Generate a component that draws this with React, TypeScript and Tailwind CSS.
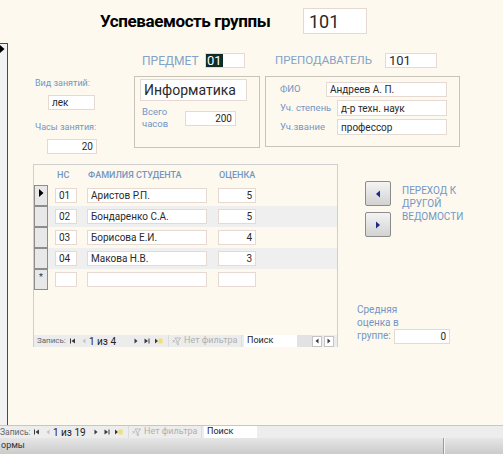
import React from 'react';

const box = 'bg-white border border-[#e6d9d1]';
const lbl = 'text-[#7296c6]';

function NavIcon({ kind, dim }: { kind: 'first' | 'prev' | 'next' | 'last' | 'new'; dim?: boolean }) {
  const c = dim ? '#c4c4c4' : '#3a3a3a';
  return (
    <svg width="10" height="8" viewBox="0 0 10 8" className="shrink-0">
      {kind === 'first' && (
        <>
          <rect x="2" y="1.5" width="1" height="5" fill={c} />
          <polygon points="7,1.5 7,6.5 3.5,4" fill={c} />
        </>
      )}
      {kind === 'prev' && <polygon points="6.5,1.5 6.5,6.5 3.5,4" fill={c} />}
      {kind === 'next' && <polygon points="3.5,1.5 3.5,6.5 6.5,4" fill={c} />}
      {kind === 'last' && (
        <>
          <polygon points="2.5,1.5 2.5,6.5 6,4" fill={c} />
          <rect x="6.5" y="1.5" width="1" height="5" fill={c} />
        </>
      )}
      {kind === 'new' && (
        <>
          <polygon points="1,1.5 1,6.5 4,4" fill={c} />
          <rect x="4.5" y="1.5" width="4" height="5" fill="#f1e06e" />
        </>
      )}
    </svg>
  );
}

function Funnel() {
  return (
    <svg width="9" height="9" viewBox="0 0 9 9" className="shrink-0">
      <path d="M3 1 L8.5 1 L6.2 4.2 L6.2 8 L5 7 L5 4.2 Z" fill="none" stroke="#b8b8b8" strokeWidth="0.9" />
      <path d="M0.5 3 L3 5.5 M3 3 L0.5 5.5" stroke="#b8b8b8" strokeWidth="0.9" />
    </svg>
  );
}

function NavBar({ total, compact }: { total: string; compact?: boolean }) {
  return (
    <div className="flex items-center h-full text-[9px] text-[#666] whitespace-nowrap">
      <span className={compact ? 'ml-[3px] w-[31px] text-[8px]' : 'w-[32px] text-[8.5px]'}>Запись:</span>
      <NavIcon kind="first" />
      <span className="w-[1px]" />
      <NavIcon kind="prev" dim />
      <span className={`text-[10px] text-[#222] ${compact ? 'w-[42px]' : 'w-[38px]'}`}>{`1 из ${total}`}</span>
      <NavIcon kind="next" />
      <span className="w-[1px]" />
      <NavIcon kind="last" />
      <span className="w-[2px]" />
      <NavIcon kind="new" />
      <span className="w-[1px] h-full bg-[#dcdcdc] ml-[4px] mr-[3px]" />
      <Funnel />
      <span className="ml-[3px] w-[57px] text-[#b0b0b0]">Нет фильтра</span>
      <span className="w-[1px] h-full bg-[#dcdcdc] mr-[2px]" />
      <span className="bg-white h-full w-[53px] pl-[3px] text-[#222] flex items-center">Поиск</span>
    </div>
  );
}

function Field({ value, className, right }: { value: string; className: string; right?: boolean }) {
  return (
    <div className={`${box} ${className} flex items-center px-[3px] text-[#2a2a2a] ${right ? 'justify-end' : ''}`}>
      {value}
    </div>
  );
}

function ArrowButton({ dir }: { dir: 'left' | 'right' }) {
  return (
    <div className="w-[26px] h-[25px] rounded-[2px] border border-[#8c8c8c] bg-gradient-to-b from-[#f4f4f4] to-[#d2d2d2] flex items-center justify-center">
      <svg width="6" height="8" viewBox="0 0 6 8">
        {dir === 'left' ? (
          <polygon points="5,0.5 5,7.5 1,4" fill="#1d2a8a" />
        ) : (
          <polygon points="1,0.5 1,7.5 5,4" fill="#1d2a8a" />
        )}
      </svg>
    </div>
  );
}

const students = [
  { id: '01', name: 'Аристов Р.П.', grade: '5' },
  { id: '02', name: 'Бондаренко С.А.', grade: '5' },
  { id: '03', name: 'Борисова Е.И.', grade: '4' },
  { id: '04', name: 'Макова Н.В.', grade: '3' },
];

export default function App() {
  return (
    <div className="w-[503px] h-[454px] overflow-hidden flex flex-col bg-[#fdf9ee] font-['Roboto','Liberation_Sans',sans-serif]">
      <div className="flex h-[425px]">
        {/* record selector strip */}
        <div className="w-[8px] pt-[43px] flex flex-col shrink-0">
          <div className="flex-1 border-t border-r border-[#4a4a4a] bg-[#f2f2f2] relative">
            <svg width="5" height="8" viewBox="0 0 5 8" className="absolute left-0 top-[1px]">
              <polygon points="0,0 0,8 4.5,4" fill="#000" />
            </svg>
          </div>
        </div>

        <div className="flex-1 flex flex-col">
          {/* title */}
          <div className="mt-[8px] h-[26px] flex items-center">
            <div className="ml-[92px] w-[203px] text-[17px] font-bold text-black tracking-[-0.4px] leading-none">
              Успеваемость группы
            </div>
            <Field value="101" className="w-[64px] h-[26px] text-[18px] !px-[5px]" />
          </div>

          {/* subject / teacher */}
          <div className="mt-[19px] flex items-start">
            <div className="ml-[27px] w-[99px] flex flex-col text-[9px]">
              <div className={`${lbl} mt-[24px] h-[12px] leading-[12px]`}>Вид занятий:</div>
              <Field value="лек" className="ml-[13px] mt-[6px] w-[47px] h-[15px] text-[10px]" />
              <div className={`${lbl} mt-[11px] h-[12px] leading-[12px]`}>Часы занятия:</div>
              <Field value="20" right className="ml-[12px] mt-[6px] w-[50px] h-[15px] text-[10px]" />
            </div>

            <div className="w-[126px] flex flex-col">
              <div className="h-[15px] flex items-center">
                <span className="ml-[8px] w-[63px] text-[12px] leading-none text-[#82a2c9]">ПРЕДМЕТ</span>
                <div className={`${box} w-[40px] h-[15px] flex items-center text-[13px]`}>
                  <span className="bg-[#0f2b2a] text-white h-full px-[1px] flex items-center leading-none">01</span>
                </div>
              </div>
              <div className="mt-[8px] h-[72px] border border-[#c9c4ba] flex flex-col">
                <Field value="Информатика" className="ml-[5px] mt-[2px] w-[107px] h-[22px] text-[14px] !px-[3px]" />
                <div className="flex items-start mt-[6px]">
                  <div className={`${lbl} ml-[7px] w-[43px] text-[9.5px] leading-[12px] mt-[-1px]`}>
                    Всего
                    <br />
                    часов
                  </div>
                  <Field value="200" right className="mt-[4px] w-[51px] h-[15px] text-[10px]" />
                </div>
              </div>
            </div>

            <div className="ml-[5px] w-[195px] flex flex-col">
              <div className="h-[15px] flex items-center">
                <span className="ml-[10px] w-[110px] text-[11.5px] leading-none text-[#82a2c9]">ПРЕПОДАВАТЕЛЬ</span>
                <Field value="101" className="w-[52px] h-[15px] text-[13px]" />
              </div>
              <div className="mt-[8px] h-[71px] border border-[#c9c4ba] flex flex-col text-[10px]">
                <div className="flex items-center mt-[5px]">
                  <span className={`${lbl} ml-[14px] w-[46px] text-[9.5px]`}>ФИО</span>
                  <Field value="Андреев А. П." className="w-[121px] h-[15px]" />
                </div>
                <div className="flex items-center mt-[3px]">
                  <span className={`${lbl} ml-[14px] w-[57px] text-[9.5px]`}>Уч. степень</span>
                  <Field value="д-р техн. наук" className="w-[110px] h-[16px]" />
                </div>
                <div className="flex items-center mt-[3px]">
                  <span className={`${lbl} ml-[14px] w-[57px] text-[9.5px]`}>Уч.звание</span>
                  <Field value="профессор" className="w-[110px] h-[16px]" />
                </div>
              </div>
            </div>
          </div>

          {/* subform + buttons */}
          <div className="mt-[10px] flex items-start">
            <div className="ml-[25px] w-[305px] h-[183px] border-t border-l border-r border-[#cfcfcf] flex flex-col">
              <div className={`h-[20px] flex items-end pb-[3px] text-[9px] font-medium ${lbl}`}>
                <span className="ml-[23px] w-[31px]">НС</span>
                <span className="w-[131px]">ФАМИЛИЯ СТУДЕНТА</span>
                <span>ОЦЕНКА</span>
              </div>
              {[...students, { id: '', name: '', grade: '' }].map((s, i) => (
                <div key={i} className={`h-[21px] flex items-center text-[10px] ${i % 2 === 1 ? 'bg-[#efefef]' : ''}`}>
                  <div className="w-[14px] h-full border border-[#8d8d8d] border-t-0 first:border-t bg-[#e8e8e8] flex items-start justify-center relative">
                    {i === 0 && (
                      <svg width="5" height="8" viewBox="0 0 5 8" className="mt-[3px]">
                        <polygon points="0,0 0,8 4.5,4" fill="#000" />
                      </svg>
                    )}
                    {i === 4 && <span className="text-[9px] leading-none mt-[3px] text-[#333]">*</span>}
                  </div>
                  <Field value={s.id} className="ml-[7px] w-[22px] h-[15px]" />
                  <Field value={s.name} className="ml-[10px] w-[120px] h-[15px]" />
                  <Field value={s.grade} right className="ml-[11px] w-[38px] h-[15px]" />
                </div>
              ))}
              <div className="flex-1" />
              <div className="h-[12px] bg-[#ececec] flex items-center">
                <NavBar total="4" compact />
                <div className="flex-1 h-full bg-[#e2e2e2]" />
                <div className="flex h-full items-center gap-[2px] pr-[3px] bg-[#ececec]">
                  <div className="w-[10px] h-[11px] border border-[#c4c4c4] bg-white flex items-center justify-center">
                    <NavIcon kind="prev" />
                  </div>
                  <div className="w-[10px] h-[11px] border border-[#c4c4c4] bg-white flex items-center justify-center">
                    <NavIcon kind="next" />
                  </div>
                </div>
              </div>
            </div>

            <div className="ml-[19px] flex flex-col">
              <div className="flex items-start">
                <div className="ml-[8px] mt-[17px] flex flex-col gap-[6px]">
                  <ArrowButton dir="left" />
                  <ArrowButton dir="right" />
                </div>
                <div className={`${lbl} ml-[11px] mt-[20px] text-[10px] leading-[13px]`}>
                  ПЕРЕХОД К
                  <br />
                  ДРУГОЙ
                  <br />
                  ВЕДОМОСТИ
                </div>
              </div>
              <div className={`${lbl} mt-[66px] text-[10px] leading-[13px] flex flex-col`}>
                <span>Средняя</span>
                <span>оценка в</span>
                <div className="flex items-end">
                  <span className="w-[37px]">группе:</span>
                  <Field value="0" right className="w-[56px] h-[15px] text-[#2a2a2a] mb-[-2px]" />
                </div>
              </div>
            </div>
          </div>
        </div>
      </div>

      {/* main navigation bar */}
      <div className="h-[13px] border-t border-[#c6c6c6] bg-[#ededed]">
        <NavBar total="19" />
      </div>
      {/* status bar */}
      <div className="h-[16px] bg-gradient-to-b from-[#e6e6e6] to-[#cbcbcb] flex items-center text-[9px] text-[#333]">
        <span className="ml-[1px] w-[442px]">ормы</span>
        <span className="w-[1px] h-full bg-[#9a9a9a]" />
        <span className="w-[1px] h-full bg-[#f4f4f4]" />
      </div>
    </div>
  );
}
